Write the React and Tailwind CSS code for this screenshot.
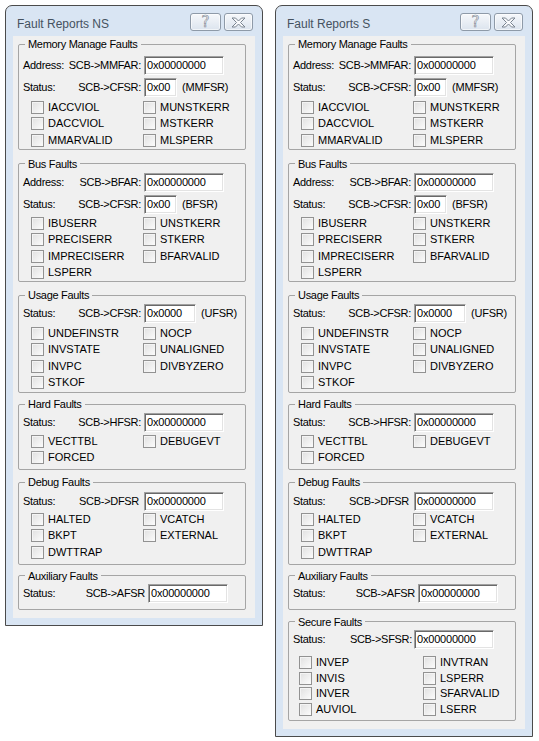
import React from "react";

const FONT = { fontFamily: '"Liberation Sans", Arial, sans-serif' };

// sunken Win32 edit box showing a register value
const RegBox = ({ value, w }) => (
  <div
    className={`flex h-[19px] items-center border border-t-[#a0a0a0] border-l-[#a0a0a0] border-r-white border-b-white bg-white pl-[2px] tracking-[-0.2px] shadow-[inset_1px_1px_0_#696969,inset_-1px_-1px_0_#e3e3e3] ${w}`}
  >
    {value}
  </div>
);

const RegRow = ({ label, reg, value, w = "w-[80px]", suffix, block = "w-[118px]", gap = "ml-[3px]", className = "" }) => (
  <div className={`flex h-[19px] items-center whitespace-nowrap pl-[4px] ${className}`}>
    <div className={`flex justify-between tracking-[-0.3px] ${block}`}>
      <span>{label}</span>
      <span>{reg}</span>
    </div>
    <div className={gap}>
      <RegBox value={value} w={w} />
    </div>
    {suffix && <span className="ml-[5px] tracking-[-0.2px]">{suffix}</span>}
  </div>
);

const Check = ({ label }) => (
  <div className="flex items-center gap-[4px]">
    <span className="h-[13px] w-[13px] shrink-0 border border-[#929292] bg-gradient-to-br from-[#e0e0e0] to-[#fcfcfc] shadow-[inset_1px_1px_0_#f4f4f4]" />
    <span>{label}</span>
  </div>
);

const Checks = ({ items, className = "", cols = "grid-cols-[112px_1fr]", rows = "auto-rows-[16.5px]", pl = "pl-[12px]" }) => (
  <div className={`grid items-center ${cols} ${rows} ${pl} ${className}`}>
    {items.map((it, i) => (it ? <Check key={i} label={it} /> : <span key={i} />))}
  </div>
);

const Group = ({ title, className = "", children }) => (
  <fieldset className={`min-w-0 rounded-[2px] border border-[#a5a5a5] p-0 ${className}`}>
    <legend className="ml-[6px] px-[3px] leading-[14px] tracking-[-0.3px]">{title}</legend>
    {children}
  </fieldset>
);

const TitleButtons = () => (
  <div className="mr-[2px] mt-[7px] flex gap-[3px]">
    <div className="flex h-[18px] w-[31px] items-center justify-center rounded-[3px] border border-[#8e9aa8] bg-gradient-to-b from-[#f6f8fb] to-[#dce4ee] shadow-[inset_0_0_0_1px_#ffffff99]">
      <span className="text-[15px] leading-none text-[#f8f9fb] [-webkit-text-stroke:0.6px_#7a8490]" style={{ fontFamily: '"DejaVu Sans", sans-serif' }}>?</span>
    </div>
    <div className="flex h-[18px] w-[29px] items-center justify-center rounded-[3px] border border-[#8e9aa8] bg-gradient-to-b from-[#f6f8fb] to-[#dce4ee] shadow-[inset_0_0_0_1px_#ffffff99]">
      <svg width="15" height="11" viewBox="0 0 15 11">
        <polygon
          points="1,1 4.5,1 7.5,4 10.5,1 14,1 9.5,5.5 14,10 10.5,10 7.5,7 4.5,10 1,10 5.5,5.5"
          fill="#f8f9fb"
          stroke="#7a8490"
          strokeWidth="1"
          strokeLinejoin="round"
        />
      </svg>
    </div>
  </div>
);

const Window = ({ title, secure }) => (
  <div className="w-[258px] rounded-t-[7px] border border-[#4b4b4b] bg-[#d9e5f3] px-[7px] pb-[7px]">
    <div className="flex h-[30px] items-start justify-between">
      <span className="ml-[4px] mt-[11px] text-[12px] leading-[14px] text-[#45525f]">{title}</span>
      <TitleButtons />
    </div>
    <div className="bg-[#f0f0f0] pb-[8px] pl-[5px] pr-[9px] pt-[1px] text-[11px] leading-[13px] text-black">
      <Group title="Memory Manage Faults">
        <RegRow className="mt-[5px]" label="Address:" reg="SCB->MMFAR:" value="0x00000000" />
        <RegRow className="mt-[3px]" label="Status:" reg="SCB->CFSR:" value="0x00" w="w-[33px]" suffix="(MMFSR)" />
        <Checks
          className="mt-[2px]"
          items={["IACCVIOL", "MUNSTKERR", "DACCVIOL", "MSTKERR", "MMARVALID", "MLSPERR"]}
        />
      </Group>

      <Group title="Bus Faults" className="mt-[7px]">
        <RegRow className="mt-[2px]" label="Address:" reg="SCB->BFAR:" value="0x00000000" />
        <RegRow className="mt-[3px]" label="Status:" reg="SCB->CFSR:" value="0x00" w="w-[33px]" suffix="(BFSR)" />
        <Checks
          className="mt-[1.5px]"
          items={["IBUSERR", "UNSTKERR", "PRECISERR", "STKERR", "IMPRECISERR", "BFARVALID", "LSPERR", null]}
        />
      </Group>

      <Group title="Usage Faults" className="mt-[6px] pb-[1px]">
        <RegRow className="mt-[2px]" label="Status:" reg="SCB->CFSR:" value="0x0000" w="w-[52px]" suffix="(UFSR)" />
        <Checks
          className="mt-[2px]"
          items={["UNDEFINSTR", "NOCP", "INVSTATE", "UNALIGNED", "INVPC", "DIVBYZERO", "STKOF", null]}
        />
      </Group>

      <Group title="Hard Faults" className="mt-[4px] pb-[3px]">
        <RegRow className="mt-[2px]" label="Status:" reg="SCB->HFSR:" value="0x00000000" />
        <Checks className="mt-[1px]" items={["VECTTBL", "DEBUGEVT", "FORCED", null]} />
      </Group>

      <Group title="Debug Faults" className="mt-[5px] pb-[3px]">
        <RegRow className="mt-[3px]" label="Status:" reg="SCB->DFSR" value="0x00000000" block="w-[116px]" gap="ml-[5px]" />
        <Checks items={["HALTED", "VCATCH", "BKPT", "EXTERNAL", "DWTTRAP", null]} />
      </Group>

      <Group title="Auxiliary Faults" className="mt-[4px] pb-[6px]">
        <RegRow className="mt-[1px]" label="Status:" reg="SCB->AFSR" value="0x00000000" block="w-[122px]" gap="ml-[3px]" />
      </Group>

      {secure && (
        <Group title="Secure Faults" className="mt-[5px] pb-[2px]">
          <RegRow className="mt-[1.5px]" label="Status:" reg="SCB->SFSR:" value="0x00000000" block="w-[119px]" gap="ml-[2px]" />
          <Checks
            className="mt-[5.5px]"
            cols="grid-cols-[124px_1fr]"
            rows="auto-rows-[15.75px]"
            pl="pl-[10px]"
            items={["INVEP", "INVTRAN", "INVIS", "LSPERR", "INVER", "SFARVALID", "AUVIOL", "LSERR"]}
          />
        </Group>
      )}
    </div>
  </div>
);

export default function App() {
  return (
    <div className="flex min-h-screen items-start gap-[12px] bg-white pl-[5px] pt-[5px]" style={FONT}>
      <Window title="Fault Reports NS" />
      <Window title="Fault Reports S" secure />
    </div>
  );
}
